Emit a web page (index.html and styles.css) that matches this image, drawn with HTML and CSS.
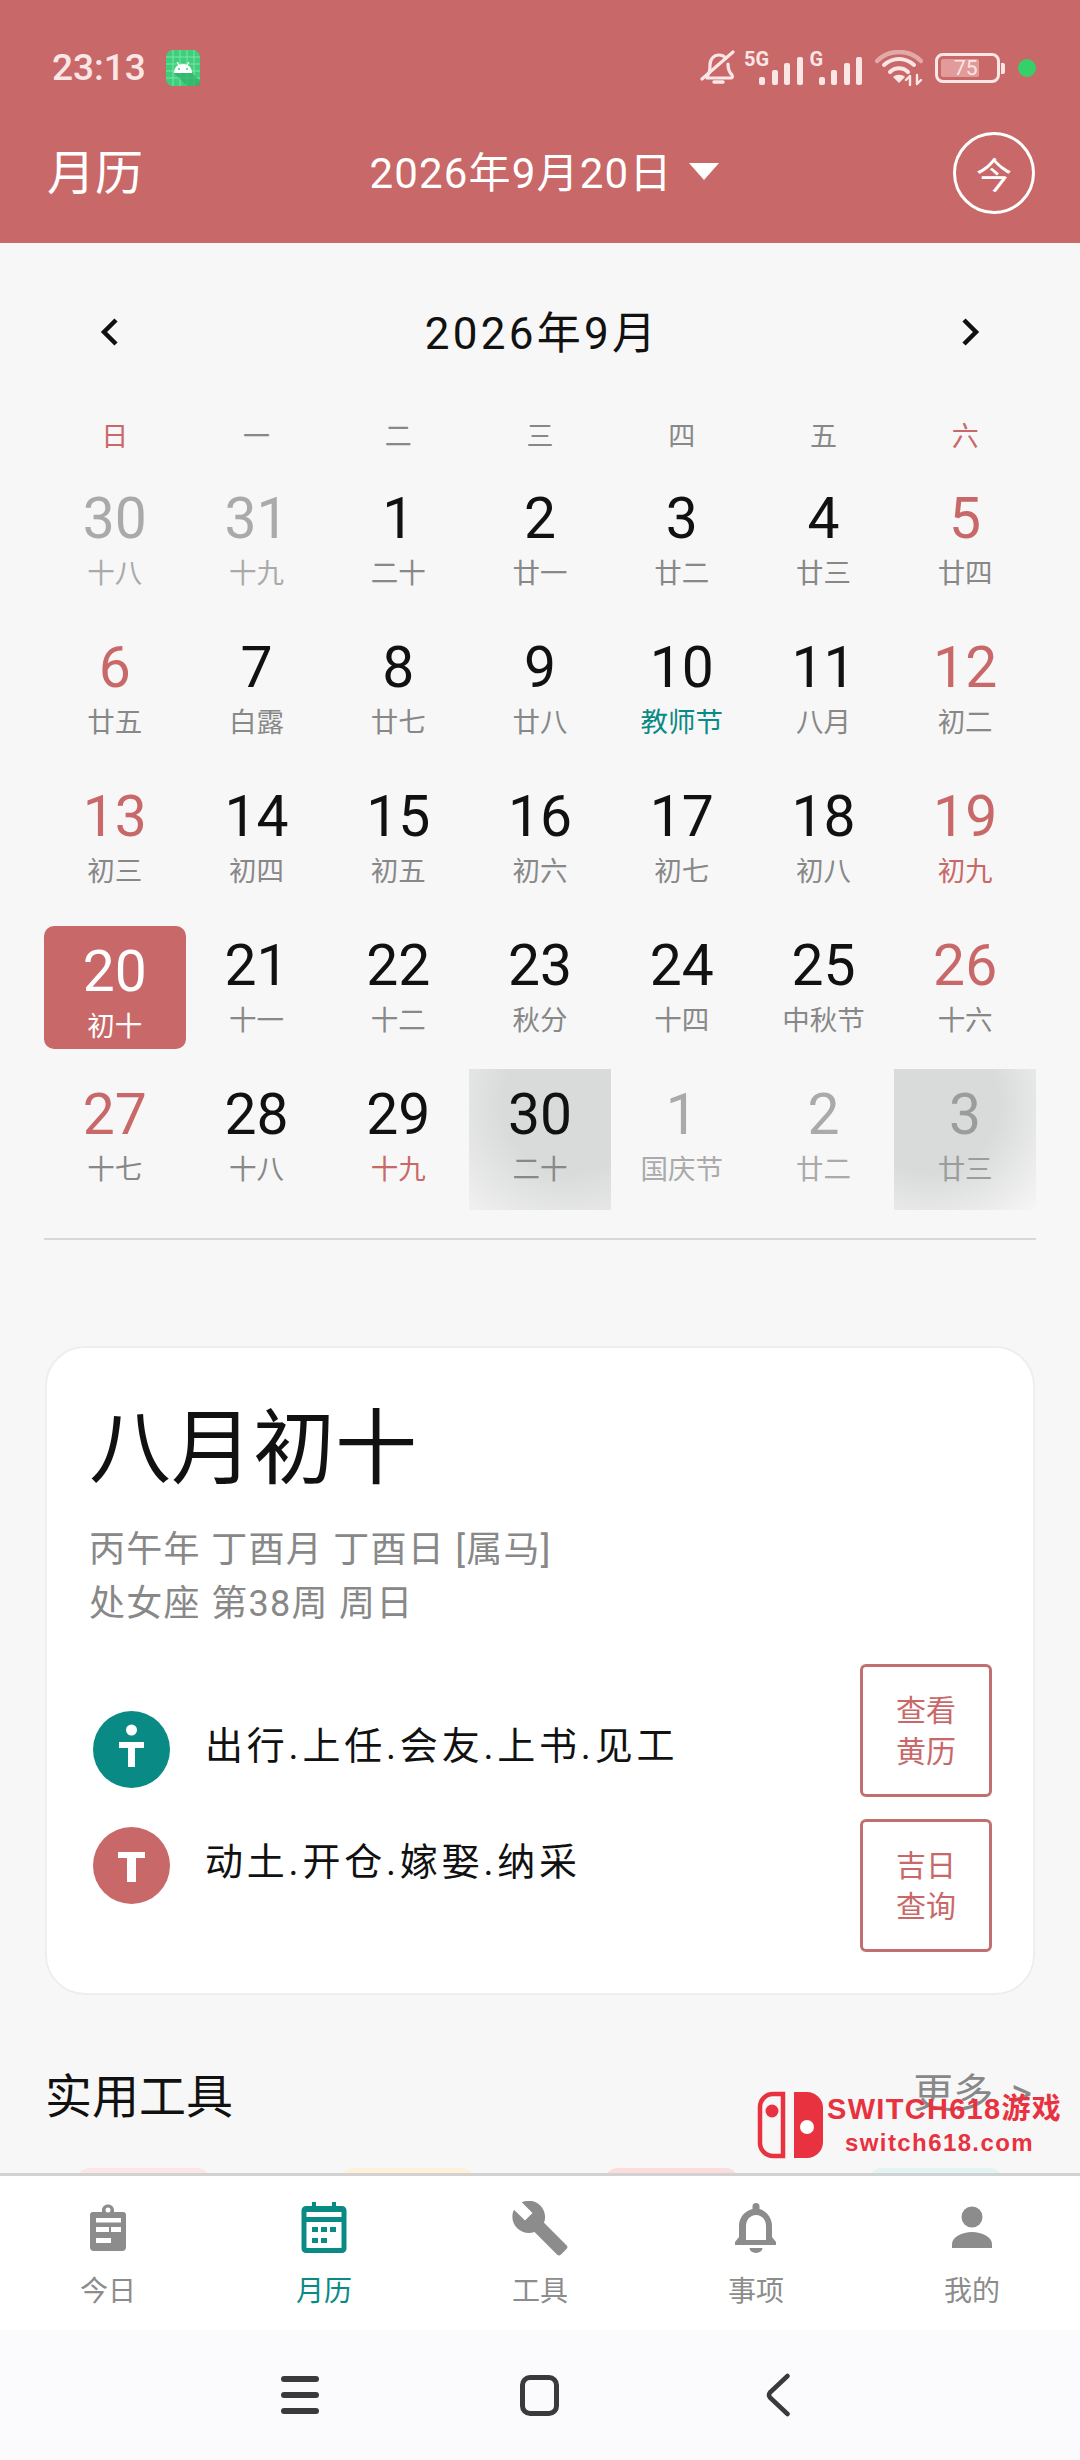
FILE: index.html
```html
<!DOCTYPE html>
<html lang="zh-CN">
<head>
<meta charset="utf-8">
<title>月历</title>
<link rel="stylesheet" href="styles.css">
</head>
<body>
<div class="page">
  <header class="appbar">
    <div class="status">
      <div class="status-left">
        <span class="time">23:13</span>
        <svg class="app-icon" viewBox="0 0 34 36" width="34" height="36">
          <rect width="34" height="36" rx="7" fill="#3ecf7c"/>
          <path d="M7 0V36M14 0V36M21 0V36M28 0V36M0 7H34M0 14H34M0 21H34M0 28H34" stroke="#7fe3a8" stroke-width="1"/>
          <path d="M8 23H26L34 31V33a3 3 0 0 1-3 3H21Z" fill="#2fae69" opacity=".7"/>
          <path d="M8 23c0-6 4-9 9-9s9 3 9 9Z" fill="#fff"/>
          <path d="M11 12l2 3M23 12l-2 3" stroke="#fff" stroke-width="1.2"/>
          <circle cx="13" cy="19" r="1" fill="#3ecf7c"/><circle cx="21" cy="19" r="1" fill="#3ecf7c"/>
        </svg>
      </div>
      <div class="status-right">
        <svg width="36" height="38" viewBox="0 0 36 38" fill="none" stroke="#fbe6e6" stroke-width="3.2" stroke-linecap="round" stroke-linejoin="round">
          <path d="M8 26c2-3 2-6 2-10 0-6 4-10 9-10 3 0 5 1 7 3M28 15c0 5 1 8 4 11 1 2 0 3-1 3H7"/>
          <path d="M2 30L33 3"/>
          <path d="M14 33h9" stroke-width="3.5"/>
        </svg>
        <span class="sig">
          <span class="sig-label">5G</span>
          <span class="bar b1"></span><span class="bar b2"></span><span class="bar b3"></span><span class="bar b4"></span>
        </span>
        <span class="sig sig-g">
          <span class="sig-label">G</span>
          <span class="bar b1"></span><span class="bar b2"></span><span class="bar b3"></span><span class="bar b4"></span>
        </span>
        <svg class="wifi" width="48" height="36" viewBox="0 0 48 36" fill="none" stroke-linecap="round">
          <path d="M2 11C14 -1 34 -1 46 11" stroke="#e3a9a9" stroke-width="4.5"/>
          <path d="M9 15C18 7 30 7 39 15" stroke="#fbe6e6" stroke-width="4"/>
          <path d="M15 22C20 17 28 17 33 22" stroke="#fbe6e6" stroke-width="4"/>
          <path d="M24 33l-6-6c3-3 9-3 12 0Z" fill="#fbe6e6"/>
          <path d="M35 35V26M31 30l4-4M42 25V34M46 30l-4 4" stroke="#fbe6e6" stroke-width="2.4"/>
        </svg>
        <span class="battery"><span class="battery-fill"></span><span class="battery-num">75</span></span>
        <span class="battery-nub"></span>
        <span class="green-dot"></span>
      </div>
    </div>
    <div class="toolbar">
      <span class="app-title">月历</span>
      <span class="date-pick">2026年9月20日<i class="caret"></i></span>
      <span class="today-btn">今</span>
    </div>
  </header>

  <main class="content">
    <section class="calendar">
      <div class="month-nav">
        <svg width="20" height="30" viewBox="0 0 20 30" fill="none" stroke="#111" stroke-width="4.5"><path d="M16 3L4 15l12 12"/></svg>
        <span class="month-title">2026年9月</span>
        <svg width="20" height="30" viewBox="0 0 20 30" fill="none" stroke="#111" stroke-width="4.5"><path d="M4 3l12 12L4 27"/></svg>
      </div>
      <div class="weekdays">
        <span class="red">日</span><span>一</span><span>二</span><span>三</span><span>四</span><span>五</span><span class="red">六</span>
      </div>
      <div class="grid">
        <div class="cell off"><b>30</b><small>十八</small></div>
        <div class="cell off"><b>31</b><small>十九</small></div>
        <div class="cell"><b>1</b><small>二十</small></div>
        <div class="cell"><b>2</b><small>廿一</small></div>
        <div class="cell"><b>3</b><small>廿二</small></div>
        <div class="cell"><b>4</b><small>廿三</small></div>
        <div class="cell wk"><b>5</b><small>廿四</small></div>

        <div class="cell wk"><b>6</b><small>廿五</small></div>
        <div class="cell"><b>7</b><small>白露</small></div>
        <div class="cell"><b>8</b><small>廿七</small></div>
        <div class="cell"><b>9</b><small>廿八</small></div>
        <div class="cell fest"><b>10</b><small>教师节</small></div>
        <div class="cell"><b>11</b><small>八月</small></div>
        <div class="cell wk"><b>12</b><small>初二</small></div>

        <div class="cell wk"><b>13</b><small>初三</small></div>
        <div class="cell"><b>14</b><small>初四</small></div>
        <div class="cell"><b>15</b><small>初五</small></div>
        <div class="cell"><b>16</b><small>初六</small></div>
        <div class="cell"><b>17</b><small>初七</small></div>
        <div class="cell"><b>18</b><small>初八</small></div>
        <div class="cell wk lred"><b>19</b><small>初九</small></div>

        <div class="cell sel"><b>20</b><small>初十</small></div>
        <div class="cell"><b>21</b><small>十一</small></div>
        <div class="cell"><b>22</b><small>十二</small></div>
        <div class="cell"><b>23</b><small>秋分</small></div>
        <div class="cell"><b>24</b><small>十四</small></div>
        <div class="cell"><b>25</b><small>中秋节</small></div>
        <div class="cell wk"><b>26</b><small>十六</small></div>

        <div class="cell wk"><b>27</b><small>十七</small></div>
        <div class="cell"><b>28</b><small>十八</small></div>
        <div class="cell lred"><b>29</b><small>十九</small></div>
        <div class="cell shade-a"><b>30</b><small>二十</small></div>
        <div class="cell off"><b>1</b><small>国庆节</small></div>
        <div class="cell off"><b>2</b><small>廿二</small></div>
        <div class="cell off shade-b"><b>3</b><small>廿三</small></div>
      </div>
      <div class="rule"></div>
    </section>

    <section class="card">
      <h1 class="lunar-title">八月初十</h1>
      <p class="meta">丙午年 丁酉月 丁酉日 [属马]</p>
      <p class="meta">处女座 第38周 周日</p>
      <div class="advice">
        <div class="advice-list">
          <div class="advice-row">
            <svg width="77" height="77" viewBox="0 0 77 77"><circle cx="38.5" cy="38.5" r="38.5" fill="#0a8a84"/><circle cx="38.5" cy="19" r="5.5" fill="#fff"/><path d="M26 31H51V37H42V56H35V37H26Z" fill="#fff"/></svg>
            <span class="advice-text">出行.上任.会友.上书.见工</span>
          </div>
          <div class="advice-row">
            <svg width="77" height="77" viewBox="0 0 77 77"><circle cx="38.5" cy="38.5" r="38.5" fill="#c96868"/><path d="M25 25H52V31H43V55H34V31H25Z" fill="#fff"/></svg>
            <span class="advice-text">动土.开仓.嫁娶.纳采</span>
          </div>
        </div>
        <div class="advice-btns">
          <span class="outline-btn">查看<br>黄历</span>
          <span class="outline-btn">吉日<br>查询</span>
        </div>
      </div>
    </section>

    <section class="tools">
      <div class="tools-head">
        <h2 class="tools-title">实用工具</h2>
        <span class="more">更多 &gt;</span>
      </div>
      <div class="tiles">
        <span class="tile t-pink"></span>
        <span class="tile t-yellow"></span>
        <span class="tile t-red"></span>
        <span class="tile t-teal"></span>
      </div>
    </section>
  </main>

  <nav class="tabbar">
    <div class="tab">
      <svg class="tab-icon" width="60" height="60" viewBox="0 0 60 60"><path d="M15 11H24V9c0-3 2.5-5.500 6-5.500S36 6 36 9v2h9a3 3 0 0 1 3 3V46a4 4 0 0 1-4 4H16a4 4 0 0 1-4-4V14a3 3 0 0 1 3-3Z" fill="#8c8c8c"/><circle cx="30" cy="9" r="2.500" fill="#fff"/><path d="M18 17H43V21.500H18ZM18 26H31V31H18ZM33 26H43V31H33ZM18 37H33V42H18Z" fill="#fff"/></svg>
      <span>今日</span>
    </div>
    <div class="tab active">
      <svg class="tab-icon" width="60" height="60" viewBox="0 0 60 60"><path d="M12 5H18V1H22V5H38V1H42V5H48a4.500 4.500 0 0 1 4.500 4.500V47.500A4.500 4.500 0 0 1 48 52H12a4.500 4.500 0 0 1-4.500-4.500V9.500A4.500 4.500 0 0 1 12 5Z" fill="#0a8a84"/><path d="M12.500 11H47.500V16H12.500ZM12.500 21H47.500V47H12.500Z" fill="#fff"/><path d="M18 26H24V31H18ZM27 26H33V31H27ZM36 26H42V31H36ZM18 37H24V42H18ZM27 37H33V42H27Z" fill="#0a8a84"/></svg>
      <span>月历</span>
    </div>
    <div class="tab">
      <svg class="tab-icon" width="60" height="60" viewBox="0 1.200 24 24"><path d="M22.700 19l-9.100-9.100c.9-2.300.4-5-1.500-6.900-2-2-5-2.400-7.400-1.300L9 6 6 9 1.600 4.700C.4 7.100.9 10.100 2.900 12.100c1.900 1.900 4.600 2.400 6.900 1.500l9.100 9.100c.4.4 1 .4 1.400 0l2.300-2.300c.5-.4.5-1.100.1-1.400z" fill="#8c8c8c"/></svg>
      <span>工具</span>
    </div>
    <div class="tab">
      <svg class="tab-icon" width="60" height="60" viewBox="0 0 60 60"><path d="M30 2a3.500 3.500 0 0 1 3.500 3.500V8C41 10 46 17 46 25V36l4 5v3H9V41l4-5V25C13 17 18 10 26.500 8V5.500A3.500 3.500 0 0 1 30 2Z" fill="#8c8c8c"/><path d="M20 39V25c0-6 4-11 10-11s10 5 10 11V39Z" fill="#fff"/><path d="M23.500 47H36.500a6.500 5 0 0 1-13 0Z" fill="#8c8c8c"/></svg>
      <span>事项</span>
    </div>
    <div class="tab">
      <svg class="tab-icon" width="60" height="60" viewBox="0 0 60 60"><circle cx="30" cy="16" r="10.500" fill="#8c8c8c"/><path d="M10 47V43C10 36 20 31 30 31S50 36 50 43V47Z" fill="#8c8c8c"/></svg>
      <span>我的</span>
    </div>
  </nav>

  <div class="sysbar">
    <span class="menu-ico"><i></i><i></i><i></i></span>
    <span class="home-ico"></span>
    <svg width="26" height="44" viewBox="0 0 26 44" fill="none" stroke="#3a3a3a" stroke-width="4.500" stroke-linecap="round" stroke-linejoin="round"><path d="M22.500 3L5 19.500q-2 2.500 0 5L22.500 41"/></svg>
  </div>

  <div class="watermark">
    <svg width="68" height="68" viewBox="0 0 68 68">
      <path d="M26 3H16A13 13 0 0 0 3 16V52A13 13 0 0 0 16 65H26Z" fill="none" stroke="#e8323f" stroke-width="4.500"/>
      <circle cx="15" cy="20" r="6.500" fill="#e8323f"/>
      <path d="M37 1H50A16 16 0 0 1 66 17V51A16 16 0 0 1 50 67H37Z" fill="#e8323f"/>
      <circle cx="50" cy="36" r="7" fill="#fff"/>
    </svg>
    <div class="wm-text">
      <span class="wm-top">SWITCH618游戏</span>
      <span class="wm-bottom">switch618.com</span>
    </div>
  </div>
</div>
</body>
</html>
```
FILE: styles.css
```css
* { box-sizing: border-box; }
html, body { margin: 0; padding: 0; }
body {
  width: 1080px;
  height: 2460px;
  overflow: hidden;
  font-family: Roboto, "Noto Sans CJK SC", sans-serif;
  background: #f7f7f7;
}
.page {
  position: relative;
  width: 1080px;
  height: 2460px;
  display: flex;
  flex-direction: column;
}

/* App bar */
.appbar {
  height: 243px;
  background: #c96868;
  color: #fff;
  flex: none;
}
.status {
  padding: 48px 44px 0 52px;
  height: 106px;
  display: flex;
  justify-content: space-between;
  align-items: flex-start;
}
.status-left { display: flex; align-items: center; gap: 20px; height: 40px; }
.time { font-size: 37px; font-weight: 500; color: #fbe6e6; line-height: 40px; }
.status-right { display: flex; align-items: center; height: 40px; }
.sig {
  position: relative;
  display: flex;
  align-items: flex-end;
  gap: 6.500px;
  height: 32px;
  margin-left: 23px;
  margin-top: 2px;
}
.sig-g { margin-left: 16px; }
.sig-label {
  position: absolute;
  left: -15px;
  top: -5px;
  font-size: 20px;
  font-weight: 700;
  line-height: 22px;
  color: #fbe6e6;
}
.sig-g .sig-label { left: -9px; }
.bar { width: 6px; background: #fbe6e6; border-radius: 2px; }
.b1 { height: 8px; }
.b2 { height: 15px; }
.b3 { height: 22px; }
.b4 { height: 28px; }
.wifi { margin-left: 13px; }
.battery {
  position: relative;
  width: 65px;
  height: 30px;
  margin-left: 12px;
  border: 3px solid #fbe6e6;
  border-radius: 8px;
  overflow: hidden;
}
.battery-fill {
  position: absolute;
  left: 3px; top: 3px; bottom: 3px;
  width: 38px;
  background: #e29a9a;
  border-radius: 2px;
}
.battery-num {
  position: absolute;
  left: 16px;
  top: 0;
  font-size: 21px;
  line-height: 24px;
  color: #fbe6e6;
}
.battery-nub { width: 4px; height: 11px; margin-left: 1px; background: #fbe6e6; border-radius: 0 2px 2px 0; }
.green-dot { width: 18px; height: 18px; margin-left: 13px; border-radius: 50%; background: #35d06a; }

.toolbar {
  height: 137px;
  padding: 0 45px 0 47px;
  display: flex;
  align-items: center;
  justify-content: space-between;
}
.app-title { font-size: 48px; line-height: 60px; margin-top: -2px; }
.date-pick { font-size: 42px; letter-spacing: 1.200px; line-height: 50px; display: flex; align-items: center; margin-top: -2px; margin-left: -8px; }
.caret {
  width: 0; height: 0;
  margin-left: 16px;
  border-left: 15px solid transparent;
  border-right: 15px solid transparent;
  border-top: 17px solid #fff;
  margin-top: -4px;
}
.today-btn {
  width: 82px;
  height: 82px;
  border: 3px solid #fff;
  border-radius: 50%;
  font-size: 36px;
  display: flex;
  align-items: center;
  justify-content: center;
  margin-top: -4px;
}

/* Main */
.content {
  height: 1930px;
  flex: none;
  overflow: hidden;
}
.calendar { padding: 59px 44px 0; }
.month-nav {
  height: 60px;
  padding: 0 56px;
  display: flex;
  align-items: center;
  justify-content: space-between;
}
.month-title { font-size: 44px; letter-spacing: 3.300px; color: #111; margin-top: -4px; margin-left: 4px; }
.weekdays {
  margin-top: 55px;
  height: 40px;
  display: grid;
  grid-template-columns: repeat(7, 1fr);
  text-align: center;
  font-size: 27px;
  line-height: 40px;
  color: #888;
}
.red { color: #c96868; }
.grid {
  margin-top: 16px;
  display: grid;
  grid-template-columns: repeat(7, 1fr);
  grid-auto-rows: 141px;
  row-gap: 8px;
}
.cell {
  padding-top: 16px;
  display: flex;
  flex-direction: column;
  align-items: center;
  color: #111;
}
.cell b { font-size: 57px; font-weight: 400; line-height: 60px; }
.cell small { margin-top: 8px; font-size: 27.500px; line-height: 34px; color: #888; }
.cell.off b, .cell.off small { color: #aaa; }
.cell.wk b { color: #c96868; }
.cell.lred small { color: #c96868; }
.cell.fest small { color: #0a8a84; }
.cell.sel {
  height: 123px;
  margin-top: 6px;
  padding-top: 16px;
  background: #c96868;
  border-radius: 10px;
  color: #fff;
}
.cell.sel small { color: #fff; }
.shade-a { background: radial-gradient(ellipse 115% 115% at 72% 25%, #d9dada 42%, #f5f5f5 100%); }
.shade-b { background: radial-gradient(ellipse 115% 115% at 25% 25%, #d9dada 42%, #f6f6f6 92%); }
.cell.shade-b b, .cell.shade-b small { color: #9c9c9c; }
.rule { height: 2px; margin-top: 28px; background: #d8d8d8; }

/* Card */
.card {
  margin: 106px 45px 0;
  height: 649px;
  padding: 51px 41px 0 42px;
  background: #fff;
  border: 2px solid #eeeeee;
  border-radius: 40px;
}
.lunar-title {
  margin: 0 0 24px;
  font-size: 82px;
  line-height: 100px;
  font-weight: 400;
  color: #111;
}
.meta {
  margin: 0;
  font-size: 36px;
  letter-spacing: 1.300px;
  line-height: 54px;
  color: #888;
}
.advice {
  margin-top: 33px;
  display: flex;
  justify-content: space-between;
}
.advice-list {
  margin: 47px 0 0 4px;
  display: flex;
  flex-direction: column;
  gap: 39px;
}
.advice-row { display: flex; align-items: center; gap: 35px; }
.advice-text {
  font-size: 38px;
  line-height: 50px;
  letter-spacing: 3.800px;
  color: #111;
  margin-top: -8px;
}
.advice-btns { display: flex; flex-direction: column; gap: 22px; }
.outline-btn {
  width: 132px;
  height: 133px;
  border: 3px solid #c07070;
  border-radius: 6px;
  display: flex;
  align-items: center;
  justify-content: center;
  text-align: center;
  font-size: 30px;
  line-height: 41px;
  color: #c96868;
}

/* Tools */
.tools { padding: 67px 45px 0; }
.tools-head {
  height: 60px;
  display: flex;
  align-items: center;
  justify-content: space-between;
}
.tools-title { margin: 0; font-size: 47px; font-weight: 400; color: #111; }
.more { font-size: 40px; word-spacing: 8px; color: #888; margin: -4px 3px 0 0; }
.tiles {
  margin: 46px 0 0 31px;
  display: flex;
  gap: 129px;
}
.tile { width: 135px; height: 60px; border-radius: 14px; }
.t-pink { background: #fde6e8; }
.t-yellow { background: #fdf2d8; }
.t-red { background: #fcdcdc; }
.t-teal { background: #e3f3f3; }

/* Tab bar */
.tabbar {
  height: 157px;
  flex: none;
  display: grid;
  grid-template-columns: repeat(5, 1fr);
  background: #fff;
  border-top: 3px solid #d2d2d2;
}
.tab {
  padding-top: 25px;
  display: flex;
  flex-direction: column;
  align-items: center;
  font-size: 28px;
  line-height: 36px;
  color: #8c8c8c;
}
.tab-icon { display: block; margin-bottom: 13px; }
.tab.active { color: #0a8a84; }

/* System bar */
.sysbar {
  height: 130px;
  flex: none;
  padding: 0 289px 0 281px;
  background: #fbfbfd;
  display: flex;
  align-items: center;
  justify-content: space-between;
}
.menu-ico { display: flex; flex-direction: column; gap: 10px; width: 38px; }
.menu-ico i { height: 6px; border-radius: 3px; background: #3a3a3a; }
.home-ico { width: 39px; height: 41px; margin-right: 6px; border: 5px solid #3a3a3a; border-radius: 10px; }

/* Watermark overlay */
.watermark {
  position: absolute;
  left: 757px;
  top: 2091px;
  display: flex;
  gap: 2px;
  color: #e8323f;
}
.wm-text { display: flex; flex-direction: column; align-items: center; }
.wm-top {
  font-family: "Liberation Sans", "Noto Sans CJK SC", sans-serif;
  font-size: 29px;
  font-weight: 700;
  line-height: 36px;
  letter-spacing: 1.300px;
}
.wm-bottom {
  margin: 2px 10px 0 0;
  font-family: "Liberation Sans", sans-serif;
  font-size: 24px;
  font-weight: 700;
  line-height: 28px;
  letter-spacing: 1.400px;
}
```
